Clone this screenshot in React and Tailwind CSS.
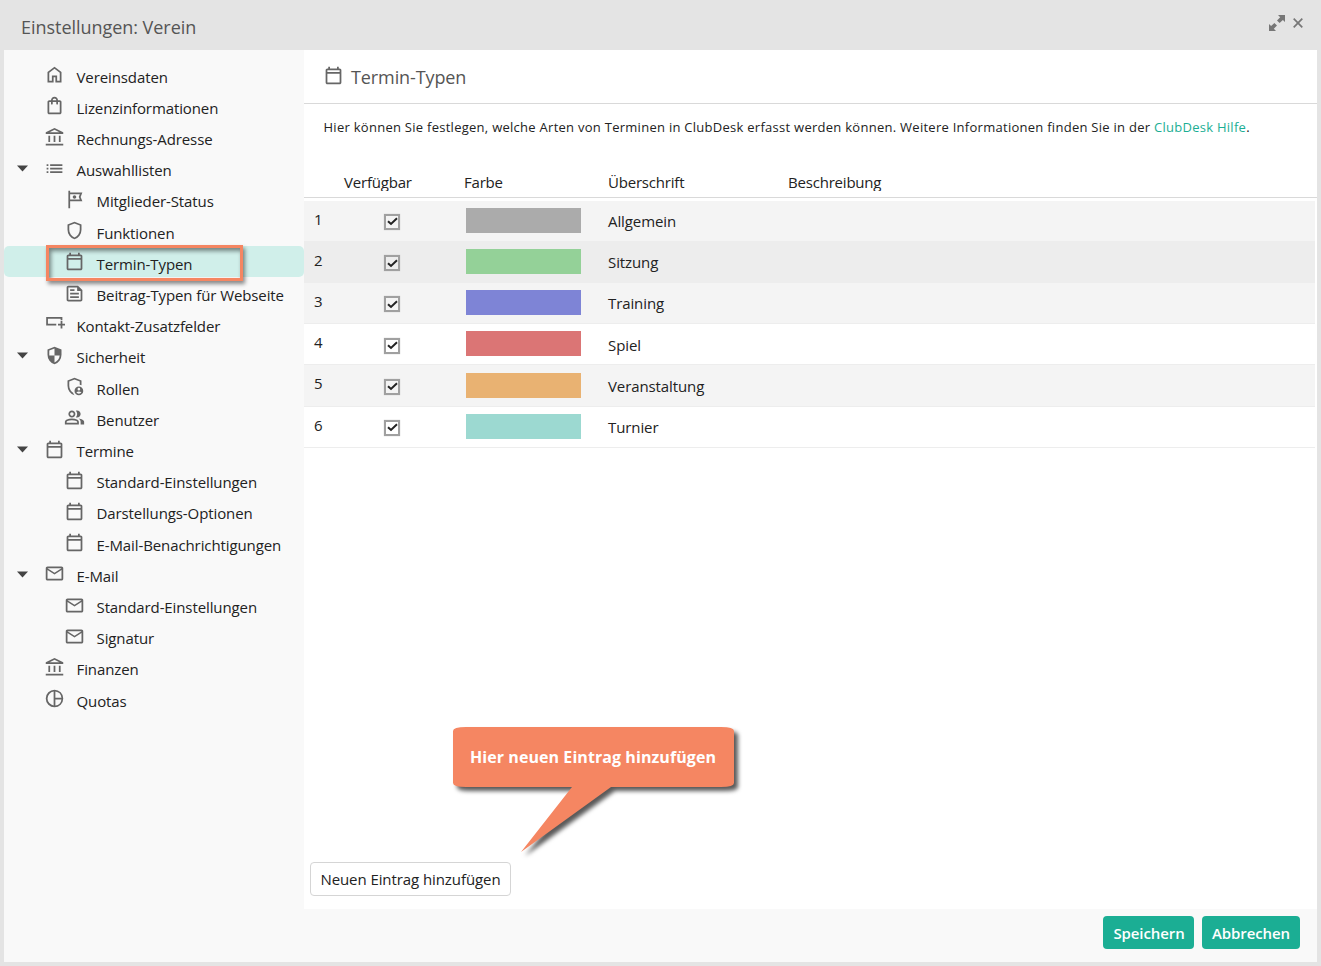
import React from "react";
import { MdOutlineFeed, MdOutlineTour } from "react-icons/md";

function Icon({ d }) {
  return (
    <svg viewBox="0 0 24 24" width="21" height="21" fill="currentColor" fillRule="evenodd">
      <path d={d} />
    </svg>
  );
}

const HomeIcon = () => <Icon d="M6 19h3v-6h6v6h3v-9l-6-4.5L6 10v9Zm-2 2V9l8-6 8 6v12h-7v-6h-2v6H4Z" />;
const BagIcon = () => (
  <Icon d="M6 22q-.825 0-1.412-.587Q4 20.825 4 20V8q0-.825.588-1.412Q5.175 6 6 6h2q0-1.65 1.175-2.825Q10.35 2 12 2q1.65 0 2.825 1.175Q16 4.35 16 6h2q.825 0 1.413.588Q20 7.175 20 8v12q0 .825-.587 1.413Q18.825 22 18 22Zm0-2h12V8h-2v2q0 .425-.287.712Q15.425 11 15 11t-.712-.288Q14 10.425 14 10V8h-4v2q0 .425-.287.712Q9.425 11 9 11t-.712-.288Q8 10.425 8 10V8H6v12Zm4-14h4q0-.825-.587-1.412Q12.825 4 12 4q-.825 0-1.412.588Q10 5.175 10 6Z" />
);
const BankIcon = () => <Icon d="M5 17v-7h2v7Zm6 0v-7h2v7Zm-9 4v-2h20v2Zm15-4v-7h2v7ZM2 8V6l10-5 10 5v2Zm4.45-2h11.1L12 3.25Z" />;
const CalendarIcon = () => (
  <Icon d="M5 22q-.825 0-1.412-.587Q3 20.825 3 20V6q0-.825.588-1.412Q4.175 4 5 4h1V2h2v2h8V2h2v2h1q.825 0 1.413.588Q21 5.175 21 6v14q0 .825-.587 1.413Q19.825 22 19 22Zm0-2h14V10H5v10Zm0-12h14V6H5v2Z" />
);
const MailIcon = () => (
  <Icon d="M4 20q-.825 0-1.412-.587Q2 18.825 2 18V6q0-.825.588-1.412Q3.175 4 4 4h16q.825 0 1.413.588Q22 5.175 22 6v12q0 .825-.587 1.413Q20.825 20 20 20Zm8-7L4 8v10h16V8Zm0-2 8-5H4Z" />
);
const ListIcon = () => <Icon d="M7 9V7h14v2Zm0 4v-2h14v2Zm0 4v-2h14v2ZM3 9V7h2v2Zm0 4v-2h2v2Zm0 4v-2h2v2Z" />;
const ShieldIcon = () => (
  <Icon d="M12 22q-3.475-.875-5.737-3.988Q4 14.9 4 11.1V5l8-3 8 3v6.1q0 3.8-2.262 6.912Q15.475 21.125 12 22Zm0-2.1q2.6-.825 4.3-3.3 1.7-2.475 1.7-5.5V6.375l-6-2.25-6 2.25V11.1q0 3.025 1.7 5.5 1.7 2.475 4.3 3.3Z" />
);
const SecurityIcon = () => (
  <Icon d="M12 22q-3.475-.875-5.737-3.988Q4 14.9 4 11.1V5l8-3 8 3v6.1q0 3.8-2.262 6.912Q15.475 21.125 12 22Zm0-2.1q2.425-.75 4.05-2.963Q17.675 14.725 17.95 12H12V4.125l-6 2.25v5.175q0 .175.05.45H12Z" />
);
const RoleIcon = () => (
  <Icon d="M12 22q-3.475-.875-5.737-3.988Q4 14.9 4 11.1V5l8-3 8 3v5.7q-.95-.5-2-.65v-3.675l-6-2.25-6 2.25V11.1q0 3.025 1.7 5.5 1.1 1.6 2.7 2.6.4 1.2 1.6 2.8ZM17 12a5 5 0 1 1 0 10 5 5 0 0 1 0-10ZM17 13.5a1.5 1.5 0 1 0 0 3 1.5 1.5 0 0 0 0-3ZM14.1 18.7Q15.2 20.4 17 20.4T19.9 18.7Q18.6 17.8 17 17.8T14.1 18.7Z" />
);
const UsersIcon = () => (
  <Icon d="M1 20v-2.8q0-.85.438-1.562Q1.875 14.925 2.6 14.55 4.15 13.775 5.75 13.388 7.35 13 9 13t3.25.387q1.6.388 3.15 1.163.725.375 1.163 1.087Q17 16.35 17 17.2V20Zm18 0v-3q0-1.1-.612-2.113-.613-1.012-1.738-1.737 1.275.15 2.4.512 1.125.363 2.1.888.9.5 1.375 1.112Q23 16.275 23 17v3ZM9 12q-1.65 0-2.825-1.175T5 8q0-1.65 1.175-2.825T9 4q1.65 0 2.825 1.175T13 8q0 1.65-1.175 2.825T9 12Zm10-4q0 1.65-1.175 2.825T15 12q-.275 0-.7-.062-.425-.063-.7-.138.675-.8 1.038-1.775Q15 9.05 15 8t-.362-2.025Q14.275 5 13.6 4.2q.35-.125.7-.163Q14.65 4 15 4q1.65 0 2.825 1.175T19 8ZM3 18h12v-.8q0-.275-.137-.5-.138-.225-.363-.35-1.35-.675-2.725-1.012Q10.4 15 9 15t-2.775.338Q4.85 15.675 3.5 16.35q-.225.125-.362.35Q3 16.925 3 17.2Zm6-8q.825 0 1.413-.588Q11 8.825 11 8t-.587-1.412Q9.825 6 9 6t-1.412.588Q7 7.175 7 8t.588 1.412Q8.175 10 9 10Z" />
);
const FieldIcon = () => <Icon d="M2.5 3.5H21V7.2H19V5.5H4.5V11H14V13H2.5ZM19 8h2v3h3v2h-3v3.5h-2V13h-3v-2h3Z" />;
const PieIcon = () => (
  <Icon d="M12 2a10 10 0 1 0 0 20 10 10 0 1 0 0-20ZM11 4.07v15.86A8 8 0 0 1 11 4.07ZM13 4.07A8 8 0 0 1 19.93 11H13ZM13 13h6.93A8 8 0 0 1 13 19.93Z" />
);

const menu = [
  { label: "Vereinsdaten", icon: HomeIcon },
  { label: "Lizenzinformationen", icon: BagIcon },
  { label: "Rechnungs-Adresse", icon: BankIcon },
  { label: "Auswahllisten", icon: ListIcon, open: true },
  { label: "Mitglieder-Status", icon: MdOutlineTour, sub: true },
  { label: "Funktionen", icon: ShieldIcon, sub: true },
  { label: "Termin-Typen", icon: CalendarIcon, sub: true, active: true },
  { label: "Beitrag-Typen für Webseite", icon: MdOutlineFeed, sub: true },
  { label: "Kontakt-Zusatzfelder", icon: FieldIcon },
  { label: "Sicherheit", icon: SecurityIcon, open: true },
  { label: "Rollen", icon: RoleIcon, sub: true },
  { label: "Benutzer", icon: UsersIcon, sub: true },
  { label: "Termine", icon: CalendarIcon, open: true },
  { label: "Standard-Einstellungen", icon: CalendarIcon, sub: true },
  { label: "Darstellungs-Optionen", icon: CalendarIcon, sub: true },
  { label: "E-Mail-Benachrichtigungen", icon: CalendarIcon, sub: true },
  { label: "E-Mail", icon: MailIcon, open: true },
  { label: "Standard-Einstellungen", icon: MailIcon, sub: true },
  { label: "Signatur", icon: MailIcon, sub: true },
  { label: "Finanzen", icon: BankIcon },
  { label: "Quotas", icon: PieIcon },
];

const rows = [
  { name: "Allgemein", color: "bg-[#ababab]", row: "bg-[#f4f4f4]" },
  { name: "Sitzung", color: "bg-[#94d198]", row: "bg-[#ededed]" },
  { name: "Training", color: "bg-[#7e84d6]", row: "bg-[#f4f4f4]" },
  { name: "Spiel", color: "bg-[#db7575]", row: "bg-white" },
  { name: "Veranstaltung", color: "bg-[#e9b272]", row: "bg-[#f4f4f4]" },
  { name: "Turnier", color: "bg-[#9cd9d1]", row: "bg-white" },
];

function MenuItem({ item }) {
  const ItemIcon = item.icon;
  return (
    <div className={`relative flex h-[31.21px] items-center rounded-[5px] ${item.active ? "bg-[#d0efea]" : ""} ${item.sub ? "pl-[60px]" : "pl-[12px]"}`}>
      {!item.sub && (
        <svg className="mt-px mr-[15px]" width="13" height="7" viewBox="0 0 13 7">
          {item.open && <path d="M1 0.5H12L6.5 6.5Z" fill="#444" />}
        </svg>
      )}
      <span className="flex w-[21px] shrink-0 text-[21px] text-[#666]"><ItemIcon /></span>
      <span className="ml-[11.5px] pt-[4px] text-[15px] leading-[20px] tracking-[-0.1px] whitespace-nowrap">{item.label}</span>
      {item.active && (
        <div className="absolute top-[-1px] left-[42px] h-[36px] w-[197px] border-3 border-[#f58662] shadow-[2px_3px_4px_rgba(0,0,0,0.45),inset_2px_3px_4px_rgba(0,0,0,0.45)]" />
      )}
    </div>
  );
}

export default function App() {
  return (
    <div className="flex h-[966px] w-[1321px] flex-col overflow-hidden bg-[#e4e4e4] px-[4px] pb-[4px] font-['Open_Sans',sans-serif] text-[#222]">
      <header className="flex h-[50px] shrink-0 items-start justify-between pr-[14px] pl-[17px] text-[#555]">
        <h1 className="pt-[14px] text-[18px] leading-[26px] tracking-[-0.04px]">Einstellungen: Verein</h1>
        <div className="flex gap-[8px] pt-[15px]">
          <svg width="16" height="16" viewBox="0 0 16 16" fill="#777">
            <path d="M9 0H16V7L13.9 4.9L10.6 8L8 5.4L11.2 2.2ZM0 9L2.1 11.1L5.4 8L8 10.6L4.8 13.8L7 16H0Z" />
          </svg>
          <svg className="mt-[3px]" width="10" height="10" viewBox="0 0 10 10" fill="none" stroke="#777" strokeWidth="1.7">
            <path d="M.7.7l8.6 8.6M9.3.7L.7 9.3" />
          </svg>
        </div>
      </header>

      <div className="flex min-h-0 flex-1 bg-[#f9f9f9]">
        <nav className="w-[300px] shrink-0 pt-[9px]">
          {menu.map((item, i) => <MenuItem key={i} item={item} />)}
        </nav>

        <main className="flex flex-1 flex-col">
          <div className="relative flex h-[859px] flex-col bg-white">
            <div className="flex h-[54px] shrink-0 items-center border-b border-[#d9d9d9] pl-[19px] text-[#555]">
              <span className="mb-[3px] text-[#666]"><CalendarIcon /></span>
              <h2 className="ml-[7px] text-[18px] leading-[26px] tracking-[-0.1px]">Termin-Typen</h2>
            </div>
            <p className="mt-[13px] pl-[19.5px] text-[13px] leading-[20px] tracking-[0.27px] whitespace-nowrap">
              Hier können Sie festlegen, welche Arten von Terminen in ClubDesk erfasst werden können. Weitere Informationen finden Sie in der <a className="text-[#1bae94]">ClubDesk Hilfe</a>.
            </p>

            <div className="mt-[30px] h-[31px] shrink-0 border-b border-[#d9d9d9] pt-[6px]">
              <div className="grid h-[18px] grid-cols-[40px_120px_144px_180px_1fr] overflow-y-clip text-[15px] leading-[18px] tracking-[-0.2px]">
                <span />
                <span>Verfügbar</span>
                <span>Farbe</span>
                <span>Überschrift</span>
                <span>Beschreibung</span>
              </div>
            </div>
            <div className="mt-[2.7px] mr-[2px]">
              {rows.map((r, i) => (
                <div key={r.name} className={`grid h-[41.2px] grid-cols-[40px_122px_142px_1fr] border-b border-[#ededed] text-[15px] leading-[20px] tracking-[-0.1px] ${r.row}`}>
                  <span className="pt-[7.9px] pl-[10px]">{i + 1}</span>
                  <span className="mt-[13.3px] ml-[40px] flex h-[16px] w-[16px] items-center justify-center border-2 border-[#a0a0a0] shadow-[0_0_1px_#bbb]">
                    <svg className="shrink-0" width="11" height="9" viewBox="0 0 11 9" fill="none" stroke="#222" strokeWidth="2"><path d="M1 4.2L4 7L10 1.3" /></svg>
                  </span>
                  <span className={`mt-[7.1px] h-[25px] w-[115px] ${r.color}`} />
                  <span className="pt-[10.35px]">{r.name}</span>
                </div>
              ))}
            </div>
            <button className="mt-auto mb-[13px] ml-[6px] h-[34px] w-[201px] shrink-0 rounded-[4px] border border-[#d5d5d5] text-[15px] tracking-[-0.08px] whitespace-nowrap">
              Neuen Eintrag hinzufügen
            </button>

            {/* Sprechblase */}
            <div className="absolute top-[677px] left-[149px] h-[130px] w-[290px]">
              <svg className="absolute overflow-visible drop-shadow-[4px_4px_2px_rgba(0,0,0,0.65)]" width="282" height="125" viewBox="0 0 282 125">
                <path d="M13 0H268Q281 0 281 4V56Q281 60 268 60H158L68 125L119 60H13Q0 60 0 56V4Q0 0 13 0Z" fill="#f58662" />
              </svg>
              <div className="relative flex h-[60px] w-[280px] items-center justify-center text-[16px] font-bold tracking-[0.07px] whitespace-nowrap text-white">
                Hier neuen Eintrag hinzufügen
              </div>
            </div>
          </div>

          <footer className="flex flex-1 justify-end gap-[8px] pt-[7px] pr-[17px] text-[15px] font-semibold tracking-[-0.1px] text-white">
            <button className="h-[33px] w-[91px] rounded-[4px] bg-[#1bae94] pt-[2px] pl-px">Speichern</button>
            <button className="h-[33px] w-[98px] rounded-[4px] bg-[#1bae94] pt-[2px]">Abbrechen</button>
          </footer>
        </main>
      </div>
    </div>
  );
}
